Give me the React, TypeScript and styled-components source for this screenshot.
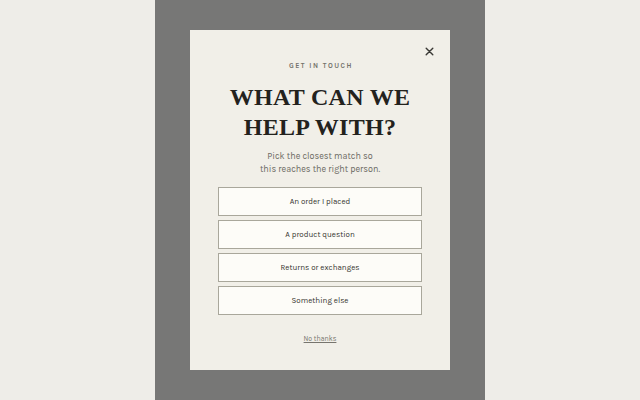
import React from "react";
import styled, { createGlobalStyle } from "styled-components";

const GlobalStyle = createGlobalStyle`
  html, body {
    margin: 0;
    padding: 0;
    background: #eeede8;
  }
  #root {
    height: 400px;
  }
`;

const Page = styled.div`
  width: 640px;
  height: 400px;
  display: flex;
  justify-content: center;
  background: #eeede8;
`;

const Backdrop = styled.div`
  width: 330px;
  height: 400px;
  background: #777776;
  display: flex;
  justify-content: center;
  padding-top: 30px;
  box-sizing: border-box;
`;

const Modal = styled.div`
  position: relative;
  width: 260px;
  height: 340px;
  box-sizing: border-box;
  background: #f1efe8;
  padding: 31px 28px 0;
  display: flex;
  flex-direction: column;
  align-items: center;
  font-family: "Karla", "Lato", "Noto Sans", sans-serif;
`;

const CloseButton = styled.button`
  position: absolute;
  top: 14px;
  right: 14px;
  width: 14px;
  height: 14px;
  padding: 0;
  border: 0;
  background: none;
  display: flex;
  align-items: center;
  justify-content: center;
  cursor: pointer;
`;

const Eyebrow = styled.div`
  font-size: 7px;
  font-weight: 700;
  letter-spacing: 1.5px;
  color: #74726b;
  line-height: 10px;
  margin-left: 2px;
`;

const Heading = styled.h1`
  margin: 11px 0 0;
  font-family: "Liberation Serif", "DejaVu Serif", serif;
  font-weight: 700;
  font-size: 24px;
  line-height: 30px;
  text-align: center;
  color: #23221d;
  letter-spacing: 0.3px;
`;

const Lead = styled.p`
  margin: 8px 0 0;
  font-size: 9px;
  line-height: 13px;
  text-align: center;
  color: #6c6a63;
`;

const Options = styled.div`
  margin-top: 11px;
  width: 100%;
  display: flex;
  flex-direction: column;
  gap: 4px;
`;

const Option = styled.button`
  height: 29px;
  width: 100%;
  box-sizing: border-box;
  background: #fdfcf8;
  border: 1px solid #a9a79b;
  font-family: inherit;
  font-size: 8px;
  color: #35342f;
  cursor: pointer;
`;

const Dismiss = styled.a`
  margin-top: 20px;
  font-size: 7px;
  color: #77756e;
  text-decoration: underline;
  cursor: pointer;
`;

const options = [
  "An order I placed",
  "A product question",
  "Returns or exchanges",
  "Something else",
];

const App = () => {
  return (
    <Page>
      <GlobalStyle />
      <Backdrop>
        <Modal>
          <CloseButton aria-label="Close">
            <svg width="9" height="9" viewBox="0 0 9 9">
              <path
                d="M1.2 1.2 L7.8 7.8 M7.8 1.2 L1.2 7.8"
                stroke="#3a3935"
                strokeWidth="1.4"
                strokeLinecap="round"
              />
            </svg>
          </CloseButton>
          <Eyebrow>GET IN TOUCH</Eyebrow>
          <Heading>
            WHAT CAN WE
            <br />
            HELP WITH?
          </Heading>
          <Lead>
            Pick the closest match so
            <br />
            this reaches the right person.
          </Lead>
          <Options>
            {options.map((o) => (
              <Option key={o}>{o}</Option>
            ))}
          </Options>
          <Dismiss>No thanks</Dismiss>
        </Modal>
      </Backdrop>
    </Page>
  );
};

export default App;
